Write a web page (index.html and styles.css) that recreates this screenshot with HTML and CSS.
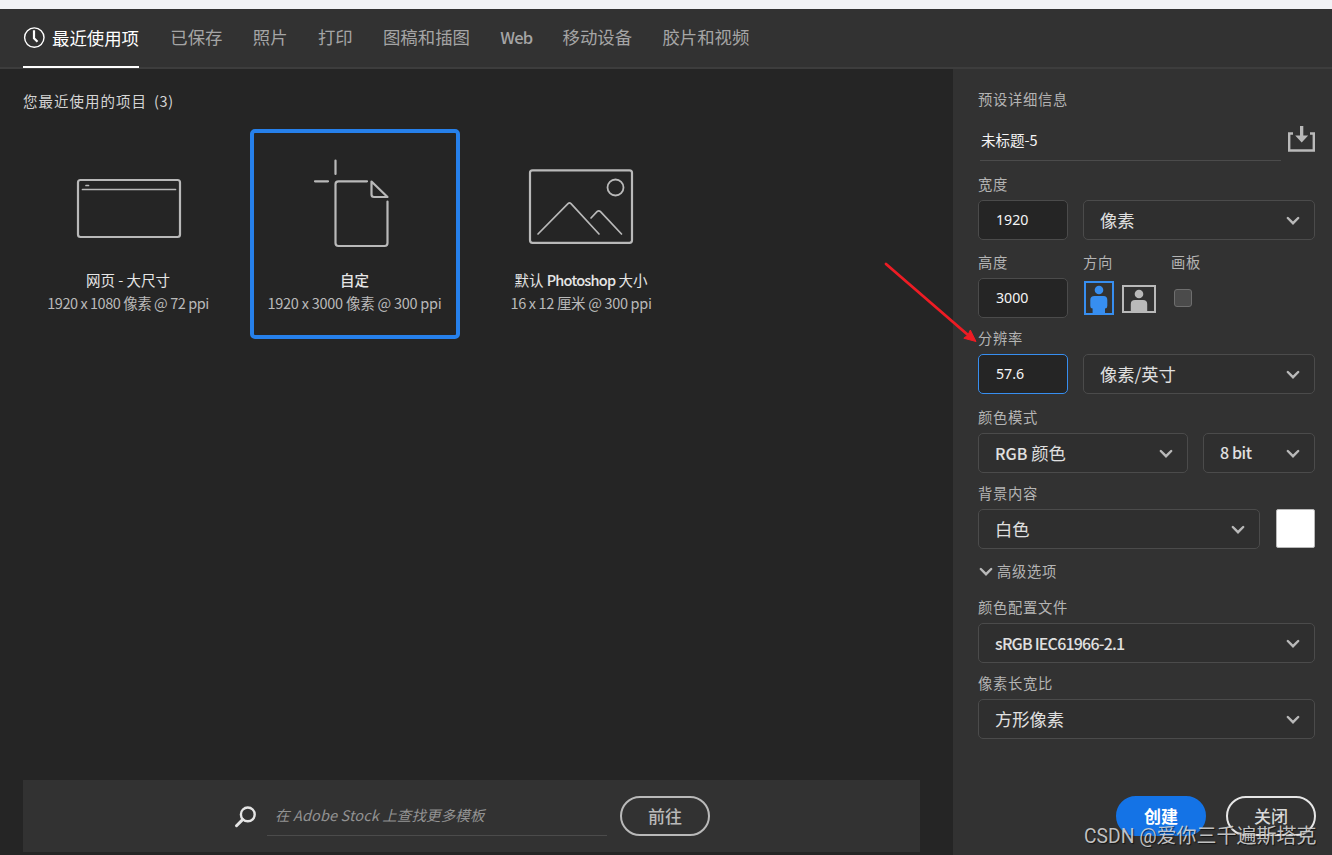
FILE: index.html
```html
<!DOCTYPE html>
<html lang="zh-CN">
<head>
<meta charset="utf-8">
<title>新建文档</title>
<link rel="stylesheet" href="styles.css">
</head>
<body>
<svg class="defs" width="0" height="0">
  <symbol id="chevron" viewBox="0 0 14 10"><path d="M1.8 2 L7 7.2 L12.2 2" fill="none" stroke="#b9b9b9" stroke-width="2.4" stroke-linecap="round"/></symbol>
</svg>
<nav class="tabs">
  <a class="tab active"><svg class="clock" width="22" height="22" viewBox="0 0 22 22"><circle cx="11.300" cy="10.600" r="9.700" fill="none" stroke="#fff" stroke-width="1.400"/><path d="M11 3.200V11.200L14.500 14.800" fill="none" stroke="#fff" stroke-width="2.200"/></svg><span>最近使用项</span></a>
  <a class="tab">已保存</a>
  <a class="tab">照片</a>
  <a class="tab">打印</a>
  <a class="tab">图稿和插图</a>
  <a class="tab web">Web</a>
  <a class="tab">移动设备</a>
  <a class="tab">胶片和视频</a>
</nav>
<div class="main">
  <section class="recent">
    <h1 class="heading">您最近使用的项目<span class="count">(3)</span></h1>
    <div class="cards">
      <div class="card">
        <svg class="art" width="202" height="130" viewBox="0 0 202 130" fill="none" stroke="#b9b9b9" stroke-width="2.200" stroke-linecap="round">
          <rect x="51" y="47" width="102" height="57" rx="2.500"/>
          <path d="M55.500 56.500H148.500M59 52.500H61.500" stroke-width="1.700"/>
        </svg>
        <div class="name">网页 - 大尺寸</div>
        <div class="size web-size">1920 x 1080 像素 @ 72 ppi</div>
      </div>
      <div class="card selected">
        <svg class="art" width="202" height="130" viewBox="0 0 202 130" fill="none" stroke="#b9b9b9" stroke-width="2.200" stroke-linecap="round" stroke-linejoin="round">
          <path d="M81.500 27.500V41M61 48.300H74M113 48.300H84.500Q81.500 48.300 81.500 51.300V110Q81.500 113 84.500 113H130.500Q133.500 113 133.500 110V68.500"/>
          <path d="M117.500 48.500L133.500 64H120Q117.500 64 117.500 61.500Z"/>
        </svg>
        <div class="name">自定</div>
        <div class="size custom-size">1920 x 3000 像素 @ 300 ppi</div>
      </div>
      <div class="card">
        <svg class="art" width="202" height="130" viewBox="0 0 202 130" fill="none" stroke="#b9b9b9" stroke-width="2.200" stroke-linecap="round">
          <rect x="50" y="37.300" width="102" height="72.500" rx="2.500"/>
          <circle cx="135.500" cy="54.500" r="8" stroke-width="1.800"/>
          <path d="M58 101L88 70.700Q89.500 69.200 91 70.700L119 101M111 85L117 78.700Q118.800 77 120.500 78.700L141.500 101" stroke-width="1.700"/>
        </svg>
        <div class="name">默认 <b>Photoshop</b> 大小</div>
        <div class="size default-size">16 x 12 厘米 @ 300 ppi</div>
      </div>
    </div>
    <div class="stock">
      <svg class="search" width="24" height="24" viewBox="0 0 24 24" fill="none" stroke="#e4e4e4"><circle cx="13.800" cy="9.400" r="6.900" stroke-width="2.400"/><path d="M8.600 14.600L2.500 20.700" stroke-width="3" stroke-linecap="round"/></svg>
      <div class="query">在 Adobe Stock 上查找更多模板</div>
      <button class="pill go">前往</button>
    </div>
  </section>
  <aside class="panel">
    <div class="label title">预设详细信息</div>
    <div class="doc">
      <div class="docname">未标题-5</div>
      <svg class="save" width="28" height="28" viewBox="0 0 28 28"><path d="M6 8.500H2.200V25.500H26.800V8.500H23" fill="none" stroke="#b9b9b9" stroke-width="2.400"/><path d="M13 1H16.300V10.500H21.200L14.700 17.500L8.200 10.500H13Z" fill="#b9b9b9"/></svg>
    </div>
    <div class="row width">
      <div class="field"><div class="label">宽度</div><div class="input">1920</div></div>
      <div class="field grow"><div class="label"></div><div class="select">像素<svg class="chev"><use href="#chevron"/></svg></div></div>
    </div>
    <div class="row height">
      <div class="field"><div class="label">高度</div><div class="input">3000</div></div>
      <div class="field orient"><div class="label">方向</div>
        <div class="icons">
          <svg width="30" height="34" viewBox="0 0 30 34"><rect x="1" y="1" width="28" height="32" fill="none" stroke="#378ef0" stroke-width="2"/><circle cx="15" cy="9" r="4.300" fill="#378ef0"/><path d="M6.300 25V19Q6.300 15 10.500 15H19.500Q23.300 15 23.300 19V25Q23.300 27.500 21 27.500V33H8.600V27.500Q6.300 27.500 6.300 25Z" fill="#378ef0"/></svg>
          <svg class="landscape" width="34" height="28" viewBox="0 0 34 28"><rect x="1" y="1" width="32" height="26" fill="none" stroke="#b9b9b9" stroke-width="2"/><circle cx="17" cy="9" r="4.300" fill="#b9b9b9"/><path d="M8.800 27V19Q8.800 15 13 15H21Q25.200 15 25.200 19V27Z" fill="#b9b9b9"/></svg>
        </div>
      </div>
      <div class="field"><div class="label">画板</div><div class="check"></div></div>
    </div>
    <div class="row res">
      <div class="field"><div class="label">分辨率</div><div class="input focus">57.6</div></div>
      <div class="field grow"><div class="label"></div><div class="select">像素/英寸<svg class="chev"><use href="#chevron"/></svg></div></div>
    </div>
    <div class="row mode">
      <div class="field grow"><div class="label">颜色模式</div><div class="select"><span><b class="latin">RGB</b> 颜色</span><svg class="chev"><use href="#chevron"/></svg></div></div>
      <div class="field depth"><div class="label"></div><div class="select latin bits">8 bit<svg class="chev"><use href="#chevron"/></svg></div></div>
    </div>
    <div class="row background">
      <div class="field grow"><div class="label">背景内容</div><div class="select">白色<svg class="chev"><use href="#chevron"/></svg></div></div>
      <div class="swatch"></div>
    </div>
    <div class="label advanced"><svg class="chev"><use href="#chevron"/></svg>高级选项</div>
    <div class="field"><div class="label">颜色配置文件</div><div class="select latin profile">sRGB IEC61966-2.1<svg class="chev"><use href="#chevron"/></svg></div></div>
    <div class="field ratio"><div class="label">像素长宽比</div><div class="select">方形像素<svg class="chev"><use href="#chevron"/></svg></div></div>
    <div class="actions">
      <button class="pill create">创建</button>
      <button class="pill close">关闭</button>
    </div>
  </aside>
</div>
<svg class="arrow" width="100" height="86" viewBox="0 0 100 86"><path d="M2 3L84 74" stroke="#ed1c24" stroke-width="2.800" stroke-linecap="round"/><path d="M92 80.500L86.300 69L84 74L79.800 77.200Z" fill="#ed1c24" stroke="#ed1c24"/></svg>
<div class="watermark">CSDN @<span>爱你三千遍斯塔克</span></div>
</body>
</html>
```
FILE: styles.css
```css
* { box-sizing: border-box; }
body {
  margin: 0;
  height: 855px;
  overflow: hidden;
  display: flex;
  flex-direction: column;
  border-top: 9px solid #f1f2f5;
  background: #252525;
  color: #e0e0e0;
  font-family: "Noto Sans CJK SC", sans-serif;
  position: relative;
}
.defs { position: absolute; }
.tabs {
  flex: none;
  height: 60px;
  padding-left: 23px;
  display: flex;
  gap: 30.3px;
  background: #323232;
  border-bottom: 2px solid #3d3d3d;
}
.tab {
  height: 59px;
  line-height: 56px;
  font-size: 17.4px;
  color: #a5a5a5;
  white-space: nowrap;
}
.tab.active {
  display: flex;
  align-items: center;
  gap: 7px;
  width: 116px;
  margin-right: 1px;
  color: #fff;
  border-bottom: 2px solid #fff;
}
.web { font-size: 16.5px; font-weight: 500; width: 32px; letter-spacing: -.8px; }
.main { flex: 1; display: flex; min-height: 0; }
.recent {
  width: 953px;
  padding: 21px 33px 3px 23px;
  display: flex;
  flex-direction: column;
}
.heading {
  margin: 0 0 17px;
  height: 22px;
  line-height: 22px;
  font-size: 14.5px;
  letter-spacing: 1px;
  font-weight: 400;
  color: #d4d4d4;
}
.count { margin-left: 7px; letter-spacing: .6px; }
.cards { display: flex; gap: 16.5px; }
.card {
  width: 210px;
  height: 210px;
  border: 4px solid transparent;
  border-radius: 5px;
  text-align: center;
  white-space: nowrap;
}
.selected { border-color: #2680eb; }
.art { display: block; }
.selected .name { font-weight: 500; }
.name { margin-top: 5px; height: 23px; line-height: 24px; font-size: 14.5px; color: #e6e6e6; }
.name b { font-weight: 500; letter-spacing: -.75px; }
.size { line-height: 24px; font-size: 14.5px; color: #b9b9b9; }
.web-size { letter-spacing: -.45px; }
.custom-size { letter-spacing: -.24px; }
.default-size { letter-spacing: -.33px; }
.stock {
  margin-top: auto;
  height: 72px;
  padding-left: 211px;
  display: flex;
  align-items: center;
  background: #323232;
}
.search { margin-top: 2px; }
.query {
  width: 340px;
  height: 40px;
  margin-left: 9px;
  padding-left: 8px;
  line-height: 37px;
  border-bottom: 1px solid #4b4b4b;
  font-size: 14.5px;
  letter-spacing: .12px;
  font-style: italic;
  color: #929292;
}
.pill {
  width: 90px;
  height: 40px;
  padding: 0 0 2px;
  border: 2px solid #b9b9b9;
  border-radius: 20px;
  background: transparent;
  font: 500 17px "Noto Sans CJK SC", sans-serif;
  color: #b9b9b9;
}
.go { margin-left: 13px; }
.panel {
  flex: 1;
  min-width: 0;
  padding: 20px 17px 0 25px;
  background: #323232;
}
.label { height: 20px; line-height: 20px; font-size: 14.3px; letter-spacing: .7px; color: #b4b4b4; white-space: nowrap; }
.doc { display: flex; justify-content: space-between; height: 52px; padding: 11px 0 0 2px; }
.docname { width: 301px; height: 41px; line-height: 39px; padding-left: 1px; border-bottom: 1px solid #4b4b4b; font-size: 14.5px; color: #f5f5f5; }
.save { margin-top: 5px; }
.row { display: flex; gap: 15px; }
.width { margin-top: 13px; }
.height { margin-top: 12px; }
.res { margin-top: 10px; }
.mode { margin-top: 13px; }
.background { margin-top: 10px; gap: 16px; align-items: flex-end; }
.ratio { margin-top: 10px; }
.field { height: 66px; flex: none; }
.field .label { margin-bottom: 6px; }
.grow { flex: 1; }
.input {
  width: 90px;
  height: 40px;
  line-height: 37px;
  padding-left: 17px;
  border: 1px solid #4b4b4b;
  border-radius: 5px;
  background: #252525;
  font-family: "Noto Sans", sans-serif;
  font-size: 14.2px;
  color: #f5f5f5;
}
.focus { border-color: #378ef0; }
.select {
  height: 40px;
  padding: 0 14px 0 16px;
  display: flex;
  align-items: center;
  justify-content: space-between;
  border: 1px solid #4b4b4b;
  border-radius: 5px;
  background: #2f2f2f;
  font-size: 17.3px;
  line-height: 38px;
}
.chev { width: 14px; height: 10px; flex: none; margin-top: 1px; }
.latin { font-weight: 500; font-size: 16px; }
.latin.bits { letter-spacing: -.4px; line-height: 36px; align-items: flex-start; }
.bits .chev { margin-top: 14.5px; }
.profile { letter-spacing: -.8px; }
.orient { width: 73px; }
.icons { display: flex; align-items: center; gap: 8px; height: 40px; width: 73px; padding-left: 1px; }
.icons svg { flex: none; }
.landscape { margin-top: 2px; }
.check { width: 18px; height: 18px; margin: 17px 0 0 3px; border: 1px solid #6e6e6e; border-radius: 3px; background: #4b4b4b; }
.check { margin-top: 17px; }
.depth { width: 112px; }
.swatch { width: 39px; height: 39px; margin: 0 0 1px; border-radius: 2px; background: #fff; border: 1px solid #b9b9b9; }
.advanced { display: flex; align-items: center; gap: 4px; padding-left: 1px; margin: 12px 0 16px; }
.actions { display: flex; justify-content: flex-end; gap: 20px; margin: 57px -1px 0 0; }
.create { background: #1473e6; border-color: #1473e6; color: #fff; font-weight: 700; }
.close { border-color: #e6e6e6; color: #d8d8d8; }
.arrow { position: absolute; left: 884px; top: 252px; }
.watermark {
  position: absolute;
  left: 1084px;
  top: 812px;
  line-height: 30px;
  font-family: Roboto, "Noto Sans CJK SC", sans-serif;
  font-size: 19.3px;
  color: rgba(215, 215, 215, .88);
  text-shadow: 1px 1px 1px rgba(0, 0, 0, .6);
  white-space: nowrap;
}
.watermark span { font-size: 20px; }
```
